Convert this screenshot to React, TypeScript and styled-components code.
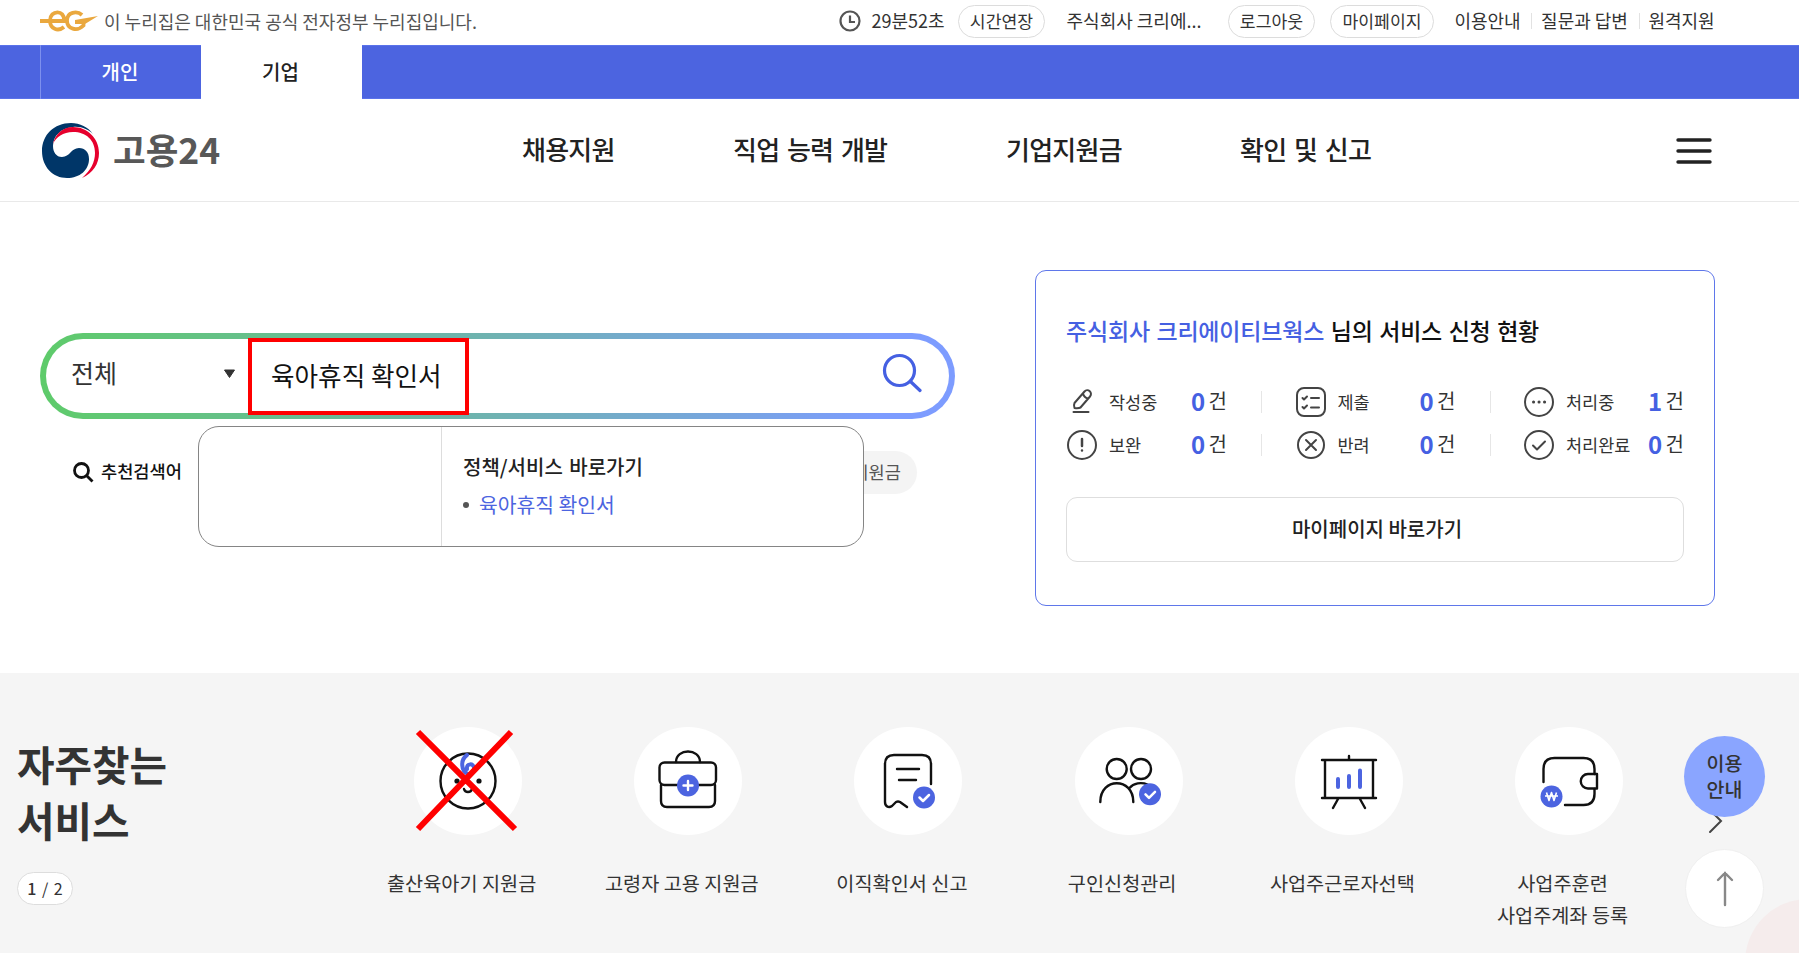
import React from 'react';
import styled, { createGlobalStyle } from 'styled-components';

const Global = createGlobalStyle`
  *{box-sizing:border-box}
  body{margin:0;background:#fff;color:#333;font-family:"Noto Sans CJK KR","Noto Sans",sans-serif;}
  svg{display:block;flex:none}
`;

const Page = styled.div`position:relative;width:1799px;height:953px;overflow:hidden;display:flex;flex-direction:column;`;

const TopBar = styled.div`height:45px;padding:0 84px 3px 40px;display:flex;align-items:center;justify-content:space-between;font-size:18px;line-height:36px;white-space:nowrap;`;
const Notice = styled.div`display:flex;align-items:center;gap:6px;color:#555;`;
const Utils = styled.div`display:flex;align-items:center;color:#333;`;
const Gap = styled.span<{ $w: number }>`width:${p => p.$w}px;flex:none;`;
const Word = styled.span<{ $w: number }>`width:${p => p.$w}px;flex:none;white-space:nowrap;text-align:center;padding-bottom:2px;`;
const Pill = styled.button<{ $w: number }>`width:${p => p.$w}px;height:33px;flex:none;border:1px solid #dcdcdc;border-radius:17px;background:#fff;font:inherit;font-size:17.2px;line-height:29px;padding:0 0 1px;color:#333;white-space:nowrap;`;
const Bar = styled.span`width:1px;height:16px;background:#e2e2e2;flex:none;`;

const TabBar = styled.nav`height:54px;background:#4c64e0;display:flex;padding-left:40px;border-top:1px solid #5a72ea;border-bottom:1px solid #5a72ea;`;
const Tab = styled.a<{ $on?: boolean }>`width:161px;height:54px;margin-top:-1px;display:flex;justify-content:center;font-size:20px;font-weight:500;line-height:53px;padding-right:2px;
  color:${p => (p.$on ? '#222' : '#fff')};background:${p => (p.$on ? '#fff' : 'transparent')};border-left:${p => (p.$on ? '0' : '1px solid #7d90ee')};`;

const Header = styled.header`height:103px;border-bottom:1px solid #e9e9e9;display:flex;align-items:center;padding:1px 87px 0 42px;`;
const Brand = styled.div`width:480px;display:flex;align-items:center;gap:13px;color:#585858;font-size:35.5px;font-weight:700;line-height:50px;`;
const BrandName = styled.span`padding-bottom:4px;`;
const Menu = styled.nav`flex:1;display:flex;font-size:26px;font-weight:500;color:#222;white-space:nowrap;letter-spacing:-.75px;word-spacing:2.500px;line-height:50px;padding-bottom:4px;`;
const MenuItem = styled.a<{ $w: number }>`width:${p => p.$w}px;`;

const Hero = styled.main`height:471px;display:flex;padding:68px 84px 0 40px;justify-content:space-between;align-items:flex-start;`;
const SearchArea = styled.section`width:915px;padding-top:63px;position:relative;`;
const SearchBox = styled.div`height:86px;border-radius:43px;border:6.500px solid transparent;background:linear-gradient(#fff,#fff) padding-box,linear-gradient(90deg,#5ecb6a,#6fb2b2 50%,#7d9cff 92%) border-box;display:flex;align-items:center;`;
const Scope = styled.div`width:202px;display:flex;align-items:center;justify-content:space-between;padding:0 12px 9px 25px;font-size:25px;line-height:40px;`;
const ScopeArrow = styled.svg`margin-top:4px;`;
const Query = styled.div`width:221px;height:77px;border:4px solid #f00;padding:0 0 0 19px;font-size:25.6px;line-height:66px;color:#111;white-space:nowrap;`;
const SearchButton = styled.button`margin-left:auto;margin-right:27px;padding:0 0 6px;border:0;background:none;`;
const Recommend = styled.div`display:flex;align-items:center;height:43px;margin-top:32px;padding-left:33px;font-size:17.6px;font-weight:500;color:#111;gap:7px;`;
const RecommendTitle = styled.span`padding-bottom:4px;`;
const Keyword = styled.span`margin-left:auto;margin-right:38px;width:120px;height:43px;border-radius:22px;background:#f4f4f4;color:#555;font-weight:400;line-height:41px;text-align:right;padding-right:16px;`;
const Suggest = styled.div`position:absolute;left:158px;top:156px;width:666px;height:121px;border:1px solid #858585;border-radius:21px;background:#fff;display:flex;`;
const Recent = styled.div`width:243px;border-right:1px solid #ddd;`;
const Results = styled.div`padding:23px 0 0 21px;white-space:nowrap;`;
const ResultTitle = styled.div`font-size:20px;font-weight:500;line-height:34px;color:#222;word-spacing:2px;`;
const ResultLink = styled.a`display:flex;align-items:center;gap:10px;font-size:20.4px;line-height:38px;margin-top:1px;color:#4c64e0;
  &::before{content:'';width:6px;height:6px;border-radius:50%;background:#555;margin-top:1px;}`;

const Card = styled.section`width:680px;height:336px;border:1px solid #5f77ea;border-radius:11px;padding:42px 30px 0;`;
const CardTitle = styled.h2`margin:0;font-size:23px;font-weight:500;line-height:34px;color:#111;white-space:nowrap;letter-spacing:-.2px;word-spacing:1.600px;em{font-style:normal;color:#4560e2;}`;
const Stats = styled.div`display:grid;grid-template-columns:228.5px 228.5px 161px;grid-auto-rows:43px;margin-top:33px;`;
const Stat = styled.div`display:flex;align-items:center;font-size:17.5px;line-height:40px;white-space:nowrap;`;
const StatIcon = styled.span`width:32px;display:flex;justify-content:center;margin-right:11px;`;
const StatLabel = styled.span`width:82px;flex:none;`;
const Count = styled.span`display:flex;align-items:center;width:36px;gap:3px;font-size:20px;padding-bottom:2px;b{font-size:24px;font-weight:700;color:#4560e2;width:15px;}`;
const StatRule = styled.i`width:1px;height:22px;background:#e6e6e6;margin-left:34px;`;
const MyPage = styled.button`margin-top:31px;width:618px;height:65px;border:1px solid #dedede;border-radius:11px;background:#fff;font:inherit;font-size:20px;font-weight:500;color:#222;padding:0 0 3px 4px;`;

const Favorites = styled.section`flex:1;background:#f5f5f5;display:flex;padding:54px 0 0 17px;`;
const Intro = styled.div`width:334.5px;padding-top:9px;`;
const IntroTitle = styled.h2`margin:0;font-size:40.8px;line-height:56px;font-weight:700;color:#333;`;
const Pager = styled.div`margin-top:24px;width:56px;height:33px;border:1px solid #ddd;border-radius:17px;background:#fff;text-align:center;font-size:16px;line-height:30px;word-spacing:2px;b{font-weight:500;}`;
const Service = styled.div`width:220.2px;display:flex;flex-direction:column;align-items:center;`;
const Disc = styled.div`width:108px;height:108px;border-radius:50%;background:#fff;margin-left:13px;display:flex;align-items:center;justify-content:center;position:relative;`;
const Label = styled.div`margin-top:32px;text-align:center;font-size:19.7px;line-height:32px;white-space:pre;`;
const Cross = styled.svg`position:absolute;left:0;top:0;overflow:visible;`;

const Guide = styled.a`position:absolute;left:1684px;top:736px;width:81px;height:81px;border-radius:50%;background:#8aa5ff;text-align:center;font-size:19.5px;font-weight:500;line-height:26px;padding-top:14px;`;
const Top = styled.a`position:absolute;left:1685px;top:849px;width:79px;height:79px;border-radius:50%;background:#fff;border:1px solid #f0f0f0;display:flex;align-items:center;justify-content:center;`;
const Chevron = styled.svg`position:absolute;left:1704px;top:806px;`;
const Blob = styled.div`position:absolute;left:1745px;top:899px;width:126px;height:126px;border-radius:50%;background:#f5ecec;`;

const ink = { fill: 'none', stroke: '#111', strokeWidth: 2.4, strokeLinecap: 'round', strokeLinejoin: 'round' } as const;
const blue = '#4c64e0';

const Check = ({ x, y }: { x: number; y: number }) => (
  <><circle cx={x} cy={y} r="11" fill={blue} /><path d={`M${x - 4.5} ${y}l3.5 3.5 6-6`} fill="none" stroke="#fff" strokeWidth="2.5" strokeLinecap="round" strokeLinejoin="round" /></>
);

const Baby = () => (
  <svg width="108" height="108"><circle cx="54" cy="54" r="27.5" {...ink} />
    <path d="M53 28c-7 5-6 16 1 19M53 42c-1-6 7-6 7-1" fill="none" stroke={blue} strokeWidth="4" strokeLinecap="round" />
    <circle cx="43" cy="54" r="2.6" fill="#111" /><circle cx="65" cy="54" r="2.6" fill="#111" /><path d="M50 62c1 4 7 4 8 0" {...ink} /></svg>
);
const Case = () => (
  <svg width="108" height="108" {...ink}><path d="M42 35c0-14 24-14 24 0" /><rect x="25.500" y="35.500" width="56.500" height="22.500" rx="5" /><path d="M27 58v16q0 6 6 6h42q6 0 6-6V58" />
    <circle cx="54" cy="58.500" r="11" fill={blue} stroke="none" /><path d="M49.500 58.500h9M54 54v9" stroke="#fff" /></svg>
);
const Receipt = () => (
  <svg width="108" height="108"><path d="M77 57V37q0-9-9-9H40q-9 0-9 9v38c0 5 4 6 7 4l4-4q2-1 4 0l7 5M43 42h22M45 53h17" {...ink} /><Check x={70} y={70.5} /></svg>
);
const People = () => (
  <svg width="108" height="108"><g {...ink}><circle cx="41.700" cy="42" r="10" /><circle cx="66" cy="42" r="10" /><path d="M25.300 75c0-25 33-25 33 0M54.500 61c4-5 12-6 18-3.500" /></g><Check x={75} y={67.3} /></svg>
);
const Board = () => (
  <svg width="108" height="108"><g {...ink}><path d="M27 33h54M27 71h54M30 33v38M78 33v38M54 29v4M43 72l-5 9M65 72l5 9" /></g><path d="M43 52v8M54 49v11M65 43.500v16.500" stroke={blue} strokeWidth="4" strokeLinecap="round" /></svg>
);
const Wallet = () => (
  <svg width="108" height="108"><g {...ink}><path d="M28.500 55V42q0-11 11-11h29q11 0 11 11v5M79.500 62v5q0 11-11 11H50" /><path d="M82 47h-9a7.200 7.200 0 0 0 0 14.500h9z" /></g><circle cx="36.500" cy="69.500" r="11" fill={blue} /><path d="M31.500 65.500l2.500 8 2.500-8 2.500 8 2.500-8M30 69h13" fill="none" stroke="#fff" strokeWidth="1.600" strokeLinejoin="round" /></svg>
);

const services = [
  ['출산육아기 지원금', Baby], ['고령자 고용 지원금', Case], ['이직확인서 신고', Receipt],
  ['구인신청관리', People], ['사업주근로자선택', Board], ['사업주훈련\n사업주계좌 등록', Wallet],
] as const;

const statIcons: Record<string, React.ReactNode> = {
  작성중: <path d="M7.500 26h15M8.500 17l10-11.500a3.500 3.500 0 0 1 5.500 5l-9.500 11q-2 1-6 .5-1-3 0-5zM17 7.500q1 4 5 5" />,
  제출: <><rect x="2" y="2" width="28" height="28" rx="7" /><path d="M7.500 12l1.500 1.500 3-3M16 12h8M7.500 21l1.500 1.500 3-3M16 21.500h8" /></>,
  처리중: <><circle cx="16" cy="16" r="14" /><path d="M10.500 16h.1M16 16h.1M21.500 16h.1" strokeWidth="3" /></>,
  보완: <><circle cx="16" cy="16" r="14" /><path d="M16 10v7M16 21.500v.1" strokeWidth="2.500" /></>,
  반려: <><circle cx="16" cy="16" r="13" /><path d="M11 11l10 10M21 11l-10 10" /></>,
  처리완료: <><circle cx="16" cy="16" r="14" /><path d="M10 16.500l4 4 8-8" /></>,
};
const stats: [string, number][] = [['작성중', 0], ['제출', 0], ['처리중', 1], ['보완', 0], ['반려', 0], ['처리완료', 0]];

export default function App() {
  return (
    <Page>
      <Global />
      <TopBar>
        <Notice>
          <svg width="58" height="22" viewBox="0 0 58 22" fill="none" stroke="#eaa83e" strokeWidth="3.800"><path d="M0 11h24c1-12-14-11-14-.5C10 19 18 22 24 17M42 5C37 .5 27 2 27 10.500s10 11.500 16.500 5V12H35" /><path d="M35 10L58 6 45 14H35z" fill="#eaa83e" stroke="none" /></svg>
          이 누리집은 대한민국 공식 전자정부 누리집입니다.
        </Notice>
        <Utils>
          <svg width="22" height="22" viewBox="0 0 22 22" fill="none" stroke="#555" strokeWidth="2.200"><circle cx="11" cy="11" r="9.500" /><path d="M11 5.500V12h5" /></svg>
          <Gap $w={9} /><Word $w={76}>29분52초</Word><Gap $w={12} /><Pill $w={87}>시간연장</Pill><Gap $w={20} />
          <Word $w={138}>주식회사 크리에...</Word><Gap $w={25} /><Pill $w={87}>로그아웃</Pill><Gap $w={15} /><Pill $w={104}>마이페이지</Pill>
          <Gap $w={20} /><Word $w={67}>이용안내</Word><Gap $w={10} /><Bar /><Gap $w={8} /><Word $w={89}>질문과 답변</Word><Gap $w={10} /><Bar /><Gap $w={8} /><Word $w={67}>원격지원</Word>
        </Utils>
      </TopBar>
      <TabBar><Tab>개인</Tab><Tab $on>기업</Tab></TabBar>
      <Header>
        <Brand>
          <svg width="58" height="56" viewBox="0 0 58 56"><path d="M29 0C12 0 0 12 0 28c0 16 11 27 25 27 13 0 22-8 22-19 0-7-4-11-10-11-8 0-9 9-17 9-6 0-9-5-9-11C11 13 19 5 31 4c8-1 16 3 20 7C46 4 38 0 29 0z" fill="#003668" /><path d="M11 21C13 11 21 4 31 4c14 0 26 11 26 26 0 11-6 20-17 25 9-8 13-16 13-25C53 17 44 9 31 9c-10 0-17 5-20 12z" fill="#e6002d" /></svg>
          <BrandName>고용24</BrandName>
        </Brand>
        <Menu><MenuItem $w={211}>채용지원</MenuItem><MenuItem $w={273}>직업 능력 개발</MenuItem><MenuItem $w={234}>기업지원금</MenuItem><MenuItem $w={140}>확인 및 신고</MenuItem></Menu>
        <svg width="36" height="28" stroke="#222" strokeWidth="3.400" strokeLinecap="round"><path d="M2 3h32M2 14h32M2 25h32" /></svg>
      </Header>
      <Hero>
        <SearchArea>
          <SearchBox>
            <Scope>전체<ScopeArrow width="13" height="10"><path d="M1.500 1h10L6.500 8.500z" fill="#333" stroke="#333" strokeLinejoin="round" /></ScopeArrow></Scope>
            <Query>육아휴직 확인서</Query>
            <SearchButton><svg width="40" height="40" fill="none" stroke="#4560e2" strokeWidth="3.200" strokeLinecap="round"><circle cx="17.500" cy="17.500" r="15" /><path d="M28.500 28.500l9.500 9" /></svg></SearchButton>
          </SearchBox>
          <Recommend>
            <svg width="21" height="21" fill="none" stroke="#111" strokeWidth="2.800"><circle cx="8.500" cy="8.500" r="7" /><path d="M13.500 13.500l6 6" /></svg>
            <RecommendTitle>추천검색어</RecommendTitle><Keyword>지원금</Keyword>
          </Recommend>
          <Suggest><Recent /><Results><ResultTitle>정책/서비스 바로가기</ResultTitle><ResultLink>육아휴직 확인서</ResultLink></Results></Suggest>
        </SearchArea>
        <Card>
          <CardTitle><em>주식회사 크리에이티브웍스</em> 님의 서비스 신청 현황</CardTitle>
          <Stats>
            {stats.map(([name, n], i) => (
              <Stat key={name}>
                <StatIcon><svg width="32" height="32" fill="none" stroke="#444" strokeWidth="2" strokeLinecap="round" strokeLinejoin="round">{statIcons[name]}</svg></StatIcon>
                <StatLabel>{name}</StatLabel><Count><b>{n}</b>건</Count>{i % 3 < 2 && <StatRule />}
              </Stat>
            ))}
          </Stats>
          <MyPage>마이페이지 바로가기</MyPage>
        </Card>
      </Hero>
      <Favorites>
        <Intro><IntroTitle>자주찾는<br />서비스</IntroTitle><Pager><b>1</b> / 2</Pager></Intro>
        {services.map(([name, Icon], i) => (
          <Service key={name}>
            <Disc><Icon />{i === 0 && <Cross width="108" height="108"><path d="M4 5l97 97M97 5L4 102" stroke="#f00" strokeWidth="6" /></Cross>}</Disc>
            <Label>{name}</Label>
          </Service>
        ))}
      </Favorites>
      <Blob />
      <Chevron width="20" height="30" fill="none" stroke="#444" strokeWidth="2" strokeLinecap="round"><path d="M6 4l11 11-11 11" /></Chevron>
      <Guide>이용<br />안내</Guide>
      <Top><svg width="18" height="38" fill="none" stroke="#888" strokeWidth="2.400" strokeLinecap="round"><path d="M9 35V3M2 10l7-7 7 7" /></svg></Top>
    </Page>
  );
}
